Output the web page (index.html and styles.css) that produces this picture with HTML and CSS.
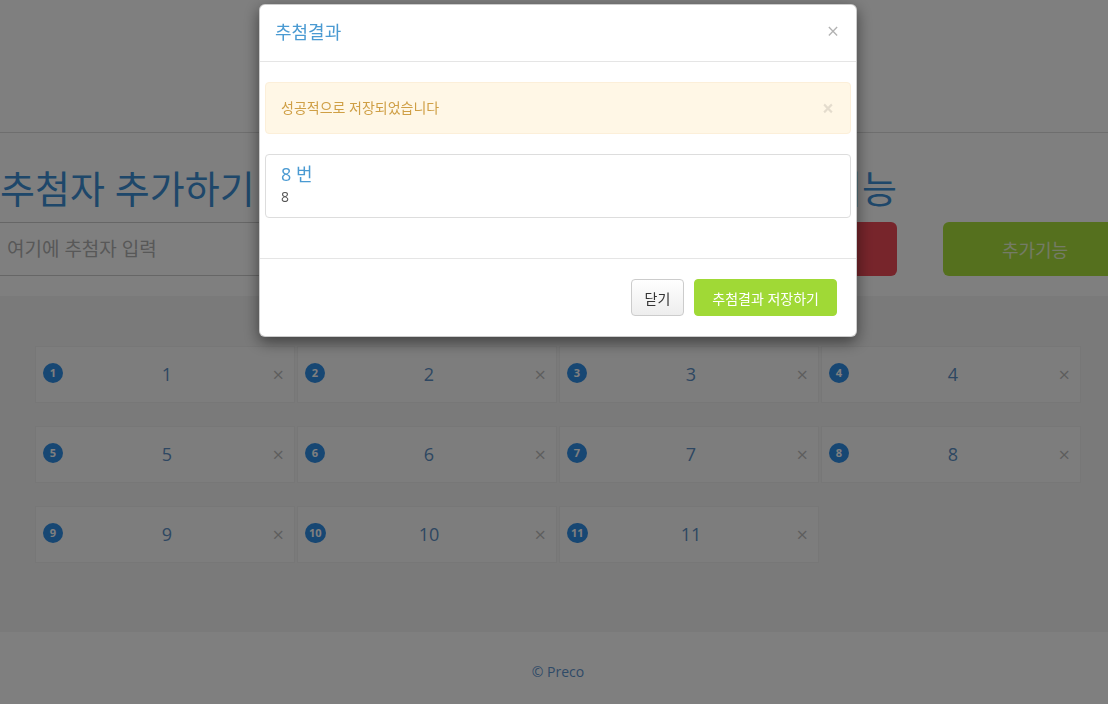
FILE: index.html
```html
<!DOCTYPE html>
<html lang="ko">
<head>
    <meta charset="UTF-8">
    <meta name="viewport" content="width=device-width, initial-scale=1.0">
    <title>추첨기</title>
    <link rel="stylesheet" href="styles.css">
</head>
<body>
    <header class="top-bar"></header>

    <section class="entry">
        <div class="entry-row">
            <div class="col-name">
                <h2 class="entry-title">추첨자 추가하기</h2>
                <input type="text" class="name-input" placeholder="여기에 추첨자 입력">
            </div>
            <div class="col-draw">
                <h2 class="entry-title right">추첨기능</h2>
                <button class="btn-draw">추첨하기</button>
            </div>
            <div class="col-extra">
                <h2 class="entry-title">&nbsp;</h2>
                <button class="btn-extra">추가기능</button>
            </div>
        </div>
    </section>

    <section class="list-area">
        <div class="name-grid">
            <div class="name-card"><span class="badge">1</span><span class="name">1</span><span class="remove">&times;</span></div>
            <div class="name-card"><span class="badge">2</span><span class="name">2</span><span class="remove">&times;</span></div>
            <div class="name-card"><span class="badge">3</span><span class="name">3</span><span class="remove">&times;</span></div>
            <div class="name-card"><span class="badge">4</span><span class="name">4</span><span class="remove">&times;</span></div>
            <div class="name-card"><span class="badge">5</span><span class="name">5</span><span class="remove">&times;</span></div>
            <div class="name-card"><span class="badge">6</span><span class="name">6</span><span class="remove">&times;</span></div>
            <div class="name-card"><span class="badge">7</span><span class="name">7</span><span class="remove">&times;</span></div>
            <div class="name-card"><span class="badge">8</span><span class="name">8</span><span class="remove">&times;</span></div>
            <div class="name-card"><span class="badge">9</span><span class="name">9</span><span class="remove">&times;</span></div>
            <div class="name-card"><span class="badge">10</span><span class="name">10</span><span class="remove">&times;</span></div>
            <div class="name-card"><span class="badge">11</span><span class="name">11</span><span class="remove">&times;</span></div>
        </div>
    </section>

    <footer class="page-footer">&copy; Preco</footer>

    <!-- Result modal -->
    <div class="modal-backdrop"></div>
    <div class="modal">
        <div class="modal-dialog">
            <div class="modal-header">
                <button class="close">&times;</button>
                <h4 class="modal-title">추첨결과</h4>
            </div>
            <div class="modal-body">
                <div class="alert">
                    <button class="close">&times;</button>
                    성공적으로 저장되었습니다
                </div>
                <div class="result-item">
                    <h4 class="result-heading">8 번</h4>
                    <p class="result-text">8</p>
                </div>
            </div>
            <div class="modal-footer">
                <button class="btn btn-default">닫기</button>
                <button class="btn btn-save">추첨결과 저장하기</button>
            </div>
        </div>
    </div>
</body>
</html>
```

FILE: styles.css
```css
body {
    margin: 0;
    font-family: "Open Sans", "Noto Sans CJK KR", sans-serif;
    font-size: 14px;
    line-height: 1.42857;
    color: #333;
    background-color: #fff;
    overflow: hidden;
}

.top-bar {
    height: 132px;
    border-bottom: 1px solid #ddd;
}

/* entry row */
.entry {
    height: 163px;
    padding-top: 33px;
    box-sizing: border-box;
}

.entry-row {
    display: flex;
}

.col-name {
    width: 555px;
    flex-shrink: 0;
}

.col-draw {
    width: 300px;
    margin-left: 42px;
    flex-shrink: 0;
}

.col-extra {
    width: 184px;
    margin-left: 46px;
    flex-shrink: 0;
}

.entry-title {
    margin: 0 0 11px;
    font-size: 38px;
    font-weight: normal;
    line-height: 45px;
    color: #3d8fd4;
    white-space: nowrap;
}

.entry-title.right {
    text-align: right;
}

.name-input {
    display: block;
    width: 100%;
    height: 54px;
    box-sizing: border-box;
    padding: 0 7px;
    border: 1px solid #ccc;
    border-left: none;
    font-family: inherit;
    font-size: 19px;
    color: #555;
}

.name-input::placeholder {
    color: #b0b0b0;
}

.btn-draw,
.btn-extra {
    display: block;
    width: 100%;
    height: 54px;
    border: none;
    border-radius: 6px;
    font-family: inherit;
    font-size: 18px;
    color: #fff;
}

.btn-draw {
    background-color: #ee4a57;
}

.btn-extra {
    background-color: #aae03c;
    color: rgba(255, 255, 255, 0.75);
}

/* list of names */
.list-area {
    background-color: #f5f5f5;
    padding: 50px 0 69px 35px;
}

.name-grid {
    display: grid;
    grid-template-columns: repeat(4, 260px);
    grid-auto-rows: 57px;
    column-gap: 2px;
    row-gap: 23px;
}

.name-card {
    position: relative;
    display: flex;
    align-items: center;
    justify-content: center;
    padding-left: 4px;
    background-color: #fbfbfb;
    border: 1px solid #efefef;
    box-sizing: border-box;
}

.name {
    font-size: 18px;
    color: #5c8fc4;
}

.badge {
    position: absolute;
    top: 16px;
    left: 7px;
    min-width: 20px;
    height: 20px;
    padding: 0 4px;
    box-sizing: border-box;
    border-radius: 10px;
    background-color: #2f8ee6;
    color: #fff;
    font-size: 11px;
    font-weight: bold;
    line-height: 20px;
    text-align: center;
}

.remove {
    position: absolute;
    right: 10px;
    top: 18px;
    font-size: 20px;
    line-height: 1;
    color: #000;
    opacity: 0.25;
}

.page-footer {
    padding: 30px 0 0 8px;
    text-align: center;
    color: #5f95cf;
}

/* modal */
.modal-backdrop {
    position: fixed;
    top: 0;
    right: 0;
    bottom: 0;
    left: 0;
    background-color: rgba(0, 0, 0, 0.5);
}

.modal {
    position: fixed;
    top: 0;
    right: 0;
    bottom: 0;
    left: 0;
    padding-left: 8px;
}

.modal-dialog {
    width: 598px;
    box-sizing: border-box;
    margin: 4px auto 0;
    background-color: #fff;
    border: 1px solid rgba(0, 0, 0, 0.2);
    border-radius: 6px;
    box-shadow: 0 5px 15px rgba(0, 0, 0, 0.5);
}

.modal-header {
    padding: 15px;
    border-bottom: 1px solid #e5e5e5;
}

.modal-title {
    margin: 0;
    font-size: 18px;
    font-weight: normal;
    line-height: 1.42857;
    color: #4a9ad2;
}

.close {
    float: right;
    padding: 0;
    border: none;
    background: none;
    font-family: inherit;
    font-size: 21px;
    font-weight: bold;
    line-height: 1;
    color: #000;
    opacity: 0.2;
}

.modal-header .close {
    margin-top: 1px;
    margin-right: 2px;
    font-weight: normal;
    opacity: 0.3;
}

.modal-body {
    padding: 20px 5px;
}

.alert {
    padding: 15px;
    margin-bottom: 20px;
    border: 1px solid #fcefd9;
    border-radius: 4px;
    background-color: #fff7e6;
    color: #cf9f45;
}

.alert .close {
    margin-right: 1px;
    opacity: 0.1;
}

.result-item {
    padding: 10px 15px;
    margin-bottom: 20px;
    border: 1px solid #ddd;
    border-radius: 4px;
}

.result-heading {
    margin: 0 0 3px;
    font-size: 18px;
    font-weight: normal;
    line-height: 1.1;
    color: #4a9ad2;
}

.result-text {
    margin: 0;
    color: #555;
}

.modal-footer {
    display: flex;
    justify-content: flex-end;
    gap: 10px;
    padding: 20px 19px 20px 15px;
    border-top: 1px solid #e5e5e5;
}

.btn {
    height: 37px;
    border-radius: 4px;
    font-family: inherit;
    font-size: 14px;
}

.btn-default {
    padding: 0 13px;
    border: 1px solid #ccc;
    background: linear-gradient(#fff, #ededed);
    color: #333;
}

.btn-save {
    padding: 0 17px;
    border: 1px solid #a0d936;
    background-color: #a0d936;
    color: #fff;
}
```
